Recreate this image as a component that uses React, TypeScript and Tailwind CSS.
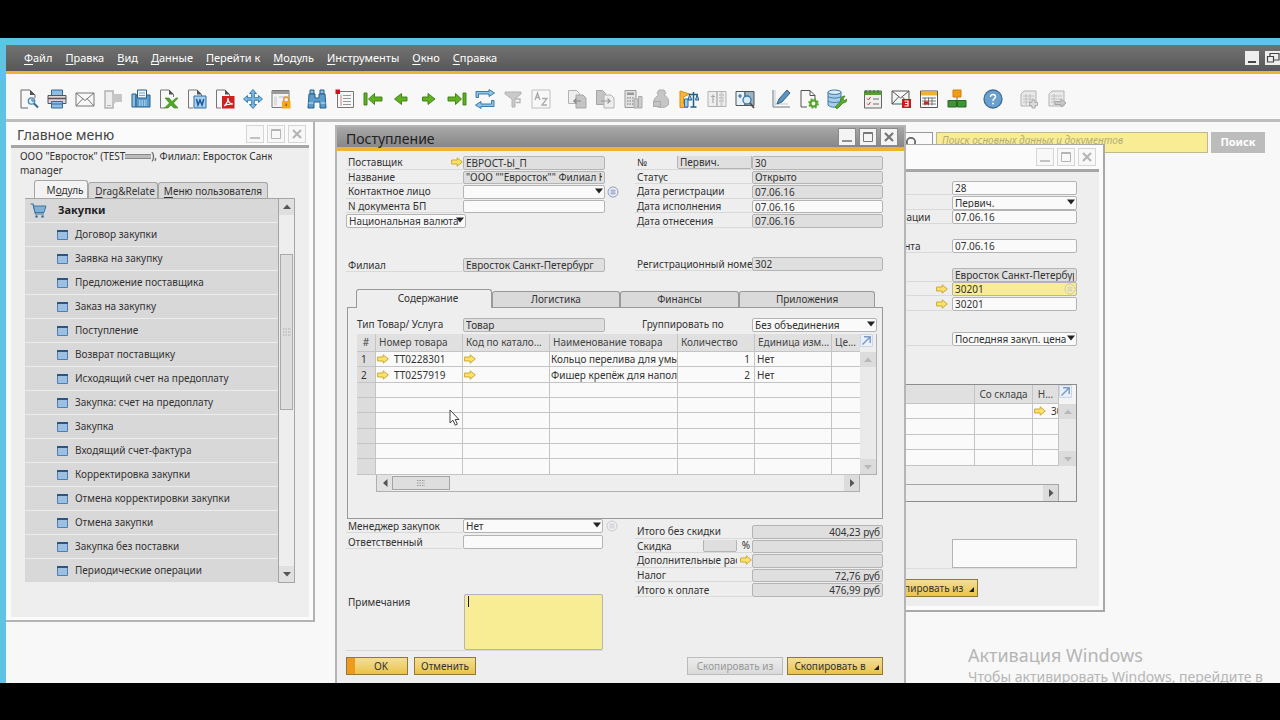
import React from "react";

const inputBase =
  "block h-full min-w-0 w-full rounded-[2px] border border-[#b4b4b4] px-[2px] py-0 text-[10px] leading-none text-[#333] outline-none";
const tones = {
  ro: "bg-[#dfdfdf]",
  rw: "bg-[#fafafa]",
  hot: "bg-[#f8ec94]",
};
type Tone = keyof typeof tones;

function Box({ id, value = "", tone = "ro", right = false, label }: { id: string; value?: string; tone?: Tone; right?: boolean; label?: string }) {
  return (
    <input
      id={id}
      aria-label={label}
      defaultValue={value}
      readOnly={tone === "ro"}
      className={`${inputBase} ${tones[tone]} ${right ? "text-right" : "text-left"}`}
    />
  );
}

function Pick({ id, value = "", label }: { id: string; value?: string; label?: string }) {
  return (
    <div className="relative h-full w-full">
      <select id={id} aria-label={label} className={`${inputBase} appearance-none bg-[#fafafa]`}>
        <option>{value}</option>
      </select>
      <svg className="pointer-events-none absolute right-[2px] top-[3px]" width="8" height="6" viewBox="0 0 8 6">
        <path d="M0 0.5h8L4 5.5z" fill="#222" />
      </svg>
    </div>
  );
}

function Arrow() {
  return (
    <svg className="shrink-0" width="12" height="10" viewBox="0 0 12 10">
      <path d="M0.6 3h5.6V0.8L11.3 5 6.2 9.2V7H0.6z" fill="#fbe36a" stroke="#c9a227" strokeWidth="0.9" />
    </svg>
  );
}

function ListMark({ dim = false }: { dim?: boolean }) {
  return (
    <svg className="shrink-0" width="12" height="12" viewBox="0 0 12 12" opacity={dim ? 0.4 : 1}>
      <circle cx="6" cy="6" r="5" fill="#eef0fa" stroke={dim ? "#999" : "#8f97bd"} />
      <path d="M3.5 4.2h5M3.5 6h5M3.5 7.8h5" stroke={dim ? "#888" : "#7078a8"} strokeWidth="0.8" />
    </svg>
  );
}

function Row({ id, label, children, mark }: { id: string; label: string; children: React.ReactNode; mark?: React.ReactNode }) {
  return (
    <div className="flex min-h-0 items-stretch pb-px">
      <div className="flex w-[117px] shrink-0 items-center justify-between overflow-hidden border-b border-[#d9d9d9] pl-[2px]">
        <label htmlFor={id} className="whitespace-nowrap leading-none">{label}</label>
        {mark}
      </div>
      <div className="min-w-0 flex-1">{children}</div>
    </div>
  );
}

function WinButtons({ dim = false }: { dim?: boolean }) {
  const c = dim ? "#b5b5b5" : "#777";
  const cls = dim
    ? "grid h-[18px] w-[18px] place-items-center border border-[#d6d6d6] bg-[#f8f8f8]"
    : "grid h-[18px] w-[18px] place-items-center border border-[#8a8a8a] bg-[#f4f4f4]";
  return (
    <div className="flex gap-[3px]">
      <button aria-label="Свернуть" className={cls}>
        <svg width="12" height="12" viewBox="0 0 12 12"><path d="M1 10h10" stroke={c} strokeWidth="1.6" /></svg>
      </button>
      <button aria-label="Развернуть" className={cls}>
        <svg width="12" height="12" viewBox="0 0 12 12"><path d="M1.5 1.5h9v9h-9zM1.5 2.5h9" fill="none" stroke={c} /></svg>
      </button>
      <button aria-label="Закрыть" className={cls}>
        <svg width="12" height="12" viewBox="0 0 12 12"><path d="M2 2l8 8M10 2l-8 8" stroke={c} strokeWidth="2.2" /></svg>
      </button>
    </div>
  );
}

function Tri({ dir, dim = false }: { dir: "up" | "down" | "left" | "right"; dim?: boolean }) {
  const d = { up: "M4 1.5L8 6H0z", down: "M0 2h8L4 6.5z", left: "M6.500 0v8L2 4z", right: "M2 0v8L6.500 4z" }[dir];
  return <svg width="8" height="8" viewBox="0 0 8 8"><path d={d} fill={dim ? "#b8b8b8" : "#555"} /></svg>;
}

const G = "#b3b3b3";
const B = "#2f6f9f";
const L = "#8fbce0";

const icons: { name: string; art: React.ReactNode }[][] = [
  [
    { name: "Предварительный просмотр", art: <><path d="M2 1h9l5 5v3M2 1v18h7" fill="none" stroke="#666" /><path d="M11 1v5h5z" fill="#555" /><circle cx="12.500" cy="12" r="3.200" fill="#dcecf7" stroke="#4c88b5" strokeWidth="1.300" /><path d="M12 11h2v2" fill="none" stroke={B} /><path d="M15 14.500l4 4" stroke={B} strokeWidth="2" /></> },
    { name: "Печать", art: <><path d="M4.500 1h11v6h-11z" fill={L} stroke={B} /><path d="M1 6.500h18v8H1z" fill="#d8d8d8" stroke="#555" /><path d="M1 9.500h18" stroke="#555" strokeWidth="1.500" /><path d="M4.500 12.500h11V19h-11z" fill={L} stroke={B} /><path d="M5 15h10" stroke={B} /></> },
    { name: "Почта", art: <path d="M1 4h18v13H1zM1 4l9 7.500L19 4M1 17l7-7.500M19 17l-7-7.500" fill="#f8f8f8" stroke="#777" /> },
    { name: "SMS", art: <><path d="M2 2h8v17H2z" fill="#eee" stroke={G} strokeWidth="1.500" /><path d="M9 5h10v8h-6l-3 3v-3H9z" fill="#c6c6c6" /><path d="M4 16.500h4" stroke={G} /></> },
    { name: "Факс", art: <><path d="M1 5h4v13H1z" fill={L} stroke="#235f8c" /><path d="M5 6h14v12H5z" fill="#5a9ccc" stroke="#235f8c" /><path d="M6.500 1h9v8h-9z" fill="#edf5fb" stroke="#235f8c" /><path d="M8 4h6M8 6.500h6" stroke="#7aa5c4" /><path d="M8 12h8M8 14h8M8 16h8" stroke="#e2f0fa" strokeDasharray="1.500 1" /></> },
    { name: "Excel", art: <><path d="M1.500 1v18H6M1.500 1H10l4.500 4.500V8" fill="none" stroke="#777" /><path d="M10 0.500v5h5z" fill="#555" /><path d="M6 9h4l3 3.500L17 9h2l-4.500 5L19 19h-4l-3-3-3 3H5.500l5-5z" fill="#52a628" stroke="#2f7d12" strokeWidth="0.600" /></> },
    { name: "Word", art: <><path d="M1.500 1v18H6M1.500 1H10l4.500 4.500V8" fill="none" stroke="#777" /><path d="M10 0.500v5h5z" fill="#555" /><path d="M7 7h12v12H7z" fill="#a9d0ee" stroke="#2a6ea8" /><path d="M9.500 10l1.500 6 2-5 2 5 1.800-6" fill="none" stroke="#1c5b98" strokeWidth="1.500" /></> },
    { name: "PDF", art: <><path d="M1.500 1v18H6M1.500 1H10l4.500 4.500V8" fill="none" stroke="#777" /><path d="M10 0.500v5h5z" fill="#555" /><path d="M7 7h12.500v12.500H7z" fill="#cf1f1f" /><path d="M9 17c3-2 4-5 4-8 0 4 2 6 5 6-3 0-6 0-9 2z" fill="none" stroke="#fff" strokeWidth="1.200" /></> },
    { name: "Запустить приложение", art: <path d="M10 0.500l3.500 4h-2.200v4.200h4.200V6.500l4 3.500-4 3.500v-2.200h-4.200v4.200h2.200l-3.500 4-3.500-4h2.200v-4.200H4.500v2.200L0.500 10l4-3.500v2.200h4.200V4.500H6.500z" fill="#7db9e2" stroke="#2c75a8" strokeWidth="0.900" /> },
    { name: "Блокировка экрана", art: <><path d="M1 1.500h17v17H1z" fill="#f4f4f4" stroke="#777" /><path d="M1 2h17v3H1z" fill="#999" /><path d="M3 7.500h3v9H3z" fill="#ddd" /><path d="M8 8h7" stroke="#bbb" /><path d="M11 12h8.500v7.500H11z" fill="#f3a81c" /><path d="M12.800 12v-1.500a2.400 2.400 0 014.800 0V12" fill="none" stroke="#e59a12" strokeWidth="1.500" /><path d="M15.200 14.500v2.500" stroke="#8a5a00" strokeWidth="1.300" /></> },
  ],
  [
    { name: "Найти", art: <><path d="M3 1h4v4H3zM13 1h4v4h-4z" fill={L} stroke="#235f8c" /><path d="M2 5h6v4h4V5h6l1 14h-6v-6H7v6H1z" fill="#5a9ccc" stroke="#235f8c" /><path d="M1.500 14h5M13.500 14h5" stroke="#cfe5f5" /></> },
    { name: "Добавить", art: <><path d="M2.500 2.500h16v16h-16z" fill="#f8f8f8" stroke="#777" /><path d="M6 6v11" stroke="#c88" /><path d="M8 6.500h8M8 9.500h8M8 12.500h8M8 15.500h8" stroke="#999" /><path d="M0.500 0.500H5V5H0.500z" fill="#cf1020" /></> },
    { name: "Первая запись", art: <path d="M1 4h3v12H1zM5.500 10l6-5.500V8H19v4h-7.500v3.500z" fill="#62b022" stroke="#35800f" strokeWidth="0.900" /> },
    { name: "Предыдущая запись", art: <path d="M3.500 10l7-5.500V8H16v4h-5.500v3.500z" fill="#62b022" stroke="#35800f" strokeWidth="0.900" /> },
    { name: "Следующая запись", art: <path d="M16 10L9 4.500V8H3.500v4H9v3.500z" fill="#62b022" stroke="#35800f" strokeWidth="0.900" /> },
    { name: "Последняя запись", art: <path d="M16 4h3v12h-3zM14.500 10l-6-5.500V8H1v4h7.500v3.500z" fill="#62b022" stroke="#35800f" strokeWidth="0.900" /> },
    { name: "Обновить", art: <path d="M1 8.500v-6h13V0.500L19.500 4 14 7.500V5H3.500v3.500zM19 11.500v6H6v2L0.500 16 6 12.500V15h10.500v-3.500z" fill="#8fc3e8" stroke="#2c6f9f" strokeWidth="0.900" /> },
    { name: "Фильтр", art: <><path d="M2 3h16v2l-6 5v8H9v-8L2 5z" fill="#c9c9c9" stroke={G} /><path d="M12 10h5v3.500h-4" fill="none" stroke={G} strokeWidth="1.300" /></> },
    { name: "Сортировка", art: <><path d="M1 1h18v18H1z" fill="#f8f8f8" stroke="#c0c0c0" /><path d="M4 11l2.500-7L9 11M5 8.500h3M11 9.500h5l-5 6.500h5" fill="none" stroke="#aaa" strokeWidth="1.300" /></> },
  ],
  [
    { name: "Базовый документ", art: <><path d="M1.500 1.500h8l3 3v10h-11z" fill="#eee" stroke={G} /><path d="M9 6h7l3 3v10H9z" fill="#c4c4c4" stroke="#a5a5a5" /><path d="M14 12H7l2.500-2.500M7 12l2.500 2.500" fill="none" stroke="#888" strokeWidth="1.200" /></> },
    { name: "Целевой документ", art: <><path d="M1.500 1.500h6l3 3v11h-9z" fill="#c4c4c4" stroke="#a5a5a5" /><path d="M9 6h7l3 3v10H9z" fill="#eee" stroke={G} /><path d="M6 12h9l-2.500-2.500M15 12l-2.500 2.500" fill="none" stroke="#999" strokeWidth="1.200" /></> },
    { name: "Валовая прибыль", art: <><path d="M2 1.500h11v17H2z" fill="#e4e4e4" stroke="#999" /><path d="M4 3.500h7v2.500H4z" fill="#999" /><path d="M4 9h7M4 12h7M4 15h7" stroke="#999" strokeWidth="1.500" strokeDasharray="1.500 1" /><path d="M11 10h4v9h-4zM15.500 7.500h3.500V19h-3.500z" fill="#ccc" stroke="#aaa" /></> },
    { name: "Средства платежа", art: <><path d="M8 1h5l2 3-2 2c4 2 5 5 4.500 9-1 4-10 5-14 1-2-5 1-8 4-10L6 4z" fill="#c6c6c6" stroke="#adadad" /><path d="M2 12h8v6H2z" fill="#aaa" /><path d="M3 14h6M3 16h6" stroke="#ddd" /></> },
    { name: "Калькуляция", art: <><path d="M1 2v16.500h8L4.500 15V8l6-3z" fill="#f6b73c" stroke="#d78d10" /><path d="M5.500 10h3.500v8H5.500z" fill="#9ccbed" stroke={B} /><path d="M14.500 3v15M11.500 18h6M10 5.500h9" stroke="#235f8c" strokeWidth="1.500" /><path d="M10.500 6L9 11h4zM18 6l-1.500 5H20z" fill="#9ccbed" stroke="#235f8c" /></> },
    { name: "Журнальная запись", art: <><path d="M1 2.500h9v15H1zM10 2.500h9v15h-9z" fill="#eee" stroke={G} /><path d="M4 7.500h4M6 5.500V14M12 6h5M12 9h5M12 12h5" stroke="#aaa" strokeWidth="1.200" /><path d="M13.500 3h2v14h-2z" fill="#ccc" /></> },
    { name: "Просмотр проводки", art: <><path d="M1 2.500h9v14H1z" fill="#e8f2fa" stroke="#555" /><path d="M10 2.500h9v14h-9z" fill="#9bb3c6" stroke="#555" /><path d="M3 7h4M5 5v4" stroke={B} strokeWidth="1.200" /><circle cx="12" cy="11" r="4" fill="#d7eaf7" stroke="#3a78a6" strokeWidth="1.300" /><path d="M15 14l4 5" stroke="#555" strokeWidth="2" /></> },
  ],
  [
    { name: "Формат печати", art: <><path d="M2 1v17h17" fill="none" stroke="#777" /><path d="M2 15h15M4 1v17" stroke="#bcd" /><path d="M6 15l2-5 8-9 3 3-8 9z" fill="#5d94bf" stroke="#2d5f88" /></> },
    { name: "Настройки формы", art: <><path d="M2 1.500h9l5 5v4M2 1.500V18h6" fill="none" stroke="#555" /><path d="M11 1.500v5h5" fill="none" stroke="#555" /><circle cx="14.500" cy="14.500" r="3" fill="none" stroke="#52a628" strokeWidth="2.200" /><circle cx="14.500" cy="14.500" r="4.500" fill="none" stroke="#52a628" strokeWidth="1.600" strokeDasharray="1.800 1.734" /></> },
    { name: "Менеджер запросов", art: <><path d="M1 3v13c2 3 11 3 13 0V3z" fill="#a8cde8" stroke="#3c79a8" /><ellipse cx="7.500" cy="3.200" rx="6.500" ry="2.200" fill="#dbecf8" stroke="#3c79a8" /><path d="M1 7.500c3 2 10 2 13 0M1 12c3 2 10 2 13 0" fill="none" stroke="#3c79a8" /><path d="M8 18l6-6c-1-3 1-5 4-5l-2 3 1.500 1.500L20 10c0 3-2 4-4 4l-6 6z" fill="#5aaa2c" stroke="#35800f" strokeWidth="0.700" /></> },
  ],
  [
    { name: "Задачи", art: <><path d="M1.500 2h17v17h-17z" fill="#f0f0f0" stroke="#666" /><path d="M1.500 2h17v4h-17z" fill="#5a9b3c" /><path d="M3 1v3M7 1v3M11 1v3M15 1v3" stroke="#3c6b22" /><path d="M4 9.500l1.500 1.500 2-3M4 14.500l1.500 1.500 2-3" fill="none" stroke="#d33" /><path d="M10 10h6M10 15h6" stroke="#999" strokeWidth="1.300" /></> },
    { name: "Оповещения", art: <><path d="M1 2h17v13H1zM1 2l8.500 7L18 2M1 15l6.500-7M18 15l-6.500-7" fill="#f4f4f4" stroke="#555" /><path d="M11 10h9v9h-9z" fill="#c91818" /><path d="M13.500 12h3.500v5h-3.500M14 14.500h3" fill="none" stroke="#fff" strokeWidth="1.200" /></> },
    { name: "Календарь", art: <><path d="M1.500 2h17v16.500h-17z" fill="#fff" stroke="#555" /><path d="M2 2.500h16V6.500H2z" fill="#f3b12c" /><path d="M3 9h14M3 12h14M3 15h14M6 8.500v8M9.500 8.500v8M13 8.500v8" stroke="#666" strokeWidth="0.900" /><path d="M5 12.500h5v3H5z" fill="#c22" /></> },
    { name: "Организация", art: <><path d="M6 1h8v7H6z" fill="#f39c12" stroke="#d07f08" /><path d="M10 8v3M5 11.500h10" stroke="#777" /><path d="M1 11.500h8.500V18H1zM10.500 11.500H19V18h-8.500z" fill="#3f9436" stroke="#256b1e" /></> },
  ],
  [{ name: "Справка", art: <><circle cx="10" cy="10" r="9" fill="#6a9fce" stroke="#3d6b94" strokeWidth="1.300" /><path d="M7.500 8c0-3.500 5.200-3.300 5 0-.2 1.800-2.500 1.700-2.500 4" fill="none" stroke="#fff" strokeWidth="1.500" /><circle cx="10" cy="14.500" r="1" fill="#fff" /></> }],
  [
    { name: "Новая активность", art: <><path d="M2 5l3-3h12v15H2z" fill="#e9e9e9" stroke={G} /><path d="M4 7h11M4 10h11M4 13h8M7 5v11M11 5v9" stroke="#c0c0c0" /><path d="M13 11h3v2.500h2.500v3H16V19h-3v-2.500h-2.500v-3H13z" fill="#ddd" stroke="#aaa" /></> },
    { name: "Экспорт", art: <><path d="M2 5l3-3h12v15H2z" fill="#e9e9e9" stroke={G} /><path d="M4 7h11M4 10h11M4 13h5M7 5v11" stroke="#c0c0c0" /><path d="M8 12.500h6V10l5 4-5 4v-2.500H8z" fill="#c8c8c8" stroke="#a5a5a5" /></> },
  ],
];

const menus = ["Файл", "Правка", "Вид", "Данные", "Перейти к", "Модуль", "Инструменты", "Окно", "Справка"];

const modules = [
  "Договор закупки", "Заявка на закупку", "Предложение поставщика", "Заказ на закупку", "Поступление",
  "Возврат поставщику", "Исходящий счет на предоплату", "Закупка: счет на предоплату", "Закупка",
  "Входящий счет-фактура", "Корректировка закупки", "Отмена корректировки закупки", "Отмена закупки",
  "Закупка без поставки", "Периодические операции",
];

function Hot({ text }: { text: string }) {
  return <><span className="underline underline-offset-2">{text[0]}</span>{text.slice(1)}</>;
}

function MainMenu() {
  const tab = "rounded-t-[3px] border border-b-0 border-[#a5a5a5] text-[10px] leading-none whitespace-nowrap";
  return (
    <section className="absolute left-0 top-0 w-[309px] border-b-2 border-r-2 border-[#b3b3b3] bg-[#fbfbfb] pb-[3px] pl-[5px] pr-[4px]">
      <header className="flex h-[26px] items-center justify-between border-b-[3px] border-[#a6a6a6] pl-[6px] pr-[3px]">
        <h2 className="pt-[3px] text-[14px] leading-none text-[#444]">Главное меню</h2>
        <WinButtons dim />
      </header>
      <div className="bg-[#eee] px-[9px] pb-[34px] pt-[1px]">
        <p className="flex h-[14px] w-[252px] items-center overflow-hidden whitespace-nowrap">
          ООО "Евросток" (TEST
          <span className="inline-block h-[5px] w-[26px] shrink-0 border-y border-[#888] bg-[#bbb]" />
          ), Филиал: Евросток Санкт
        </p>
        <p className="h-[14px] leading-[14px]">manager</p>
        <div className="mt-[3px] flex items-end pl-[14px]">
          <button className={`${tab} h-[18px] w-[54px] bg-[#f3f3f3] pl-[8px]`}>М<span className="underline">о</span>дуль</button>
          <button className={`${tab} h-[16px] w-[70px] bg-[#d9d9d9] pl-[4px]`}><Hot text="Drag&Relate" /></button>
          <button className={`${tab} h-[16px] w-[110px] bg-[#d9d9d9]`}><Hot text="Меню пользователя" /></button>
        </div>
        <div className="mx-[5px] flex border-t border-[#a5a5a5]">
          <ul className="flex-1 bg-[#d8d8d8]">
            <li className="flex h-6 items-center gap-[11px] border-b border-[#ececec] pl-[5px] text-[11px] font-bold text-[#222]">
              <svg width="17" height="16" viewBox="0 0 17 16">
                <path d="M0.500 1H3l2.500 10h8.500" fill="none" stroke="#3f6f96" strokeWidth="1.200" />
                <path d="M3.500 3H16l-2 6.500H5z" fill="#7fb0d8" stroke="#3a74a3" />
                <circle cx="6.500" cy="13.500" r="1.300" fill="#3f6f96" /><circle cx="12.500" cy="13.500" r="1.300" fill="#3f6f96" />
              </svg>
              <span>Закупки</span>
            </li>
            {modules.map((m) => (
              <li key={m} className="h-6 border-b border-[#ececec]">
                <a href="#" className="flex h-full items-center gap-[7px] pl-[32px] text-[10px] text-[#333]">
                  <svg width="11" height="10" viewBox="0 0 11 10"><path d="M0.500 0.500h10v9h-10z" fill="#9dc0e2" stroke="#4f7fae" /><path d="M0 1h11" stroke="#2b5580" strokeWidth="2" /></svg>
                  {m}
                </a>
              </li>
            ))}
          </ul>
          <div className="flex w-[17px] flex-col items-center border-x border-b border-[#a5a5a5] bg-[#eee]">
            <button aria-label="Вверх" className="grid h-4 w-full place-items-center bg-[#e0e0e0]"><Tri dir="up" /></button>
            <div className="mt-[39px] grid h-[156px] w-[13px] place-items-center border border-[#aaa] bg-[#dedede]">
              <svg width="8" height="8" viewBox="0 0 8 8"><path d="M0 1h8M0 4h8M0 7h8" stroke="#aaa" strokeDasharray="1.500 1" /></svg>
            </div>
            <button aria-label="Вниз" className="mt-auto grid h-4 w-full place-items-center bg-[#e0e0e0]"><Tri dir="down" /></button>
          </div>
        </div>
      </div>
    </section>
  );
}

function Expand() {
  return (
    <svg width="13" height="13" viewBox="0 0 13 13">
      <path d="M0.500 0.500h12v12H0.500z" fill="#eaf0f9" stroke="#ccd6e6" />
      <path d="M2.500 10.500l7-7M4 2.800h6.200V9" fill="none" stroke="#7d9cc9" strokeWidth="1.500" />
    </svg>
  );
}

const gold = "border border-[#8d7a3a] bg-linear-to-b from-[#f3de96] to-[#eac443] text-[10px] leading-none text-[#333] whitespace-nowrap";

function Corner() {
  return <svg className="absolute bottom-[4px] right-[3px]" width="5" height="5" viewBox="0 0 5 5"><path d="M5 0v5H0z" fill="#222" /></svg>;
}

function OrderWindow() {
  const label = "flex w-[114px] items-center justify-between overflow-hidden whitespace-nowrap border-b border-[#d9d9d9] pl-[5px] pr-[4px] leading-none";
  const row = "flex h-[14px] justify-end";
  const cell = "overflow-hidden border-b border-r border-[#c4c4c4] p-0";
  return (
    <section className="absolute left-[694px] top-[22px] w-[405px] border-b-2 border-r-2 border-t border-[#a9a9a9] bg-[#fbfbfb] pb-[4px] pr-[4px]">
      <header className="flex h-[27px] items-center justify-end border-b-[3px] border-[#a6a6a6] pr-[3px]"><WinButtons dim /></header>
      <div className="bg-[#eee] pb-[9px] pr-[22px] pt-[9px]">
        <div className={row}><label htmlFor="o-num" className={label}>№</label><div className="w-[125px]"><Box id="o-num" value="28" tone="rw" /></div></div>
        <div className={`${row} mt-px`}><label htmlFor="o-ser" className={label}>Серия</label><div className="w-[125px]"><Pick id="o-ser" value="Первич." /></div></div>
        <div className={row}><label htmlFor="o-reg" className={label}>Дата регистрации</label><div className="w-[125px]"><Box id="o-reg" value="07.06.16" tone="rw" /></div></div>
        <div className={`${row} mt-[15px]`}><label htmlFor="o-doc" className={label}>Дата документа</label><div className="w-[125px]"><Box id="o-doc" value="07.06.16" tone="rw" /></div></div>
        <div className={`${row} mt-[15px]`}><label htmlFor="o-br" className={label}>Филиал</label><div className="w-[125px]"><Box id="o-br" value="Евросток Санкт-Петербург" /></div></div>
        <div className={row}>
          <div className={label}><label htmlFor="o-from">Со склада</label><Arrow /></div>
          <div className="relative w-[125px]"><Box id="o-from" value="30201" tone="hot" /><span className="absolute right-px top-px"><ListMark dim /></span></div>
        </div>
        <div className={`${row} mt-px`}>
          <div className={label}><label htmlFor="o-to">На склад</label><Arrow /></div>
          <div className="w-[125px]"><Box id="o-to" value="30201" tone="rw" /></div>
        </div>
        <div className={`${row} mt-[21px]`}><label htmlFor="o-pr" className={label}>Прайс-лист</label><div className="w-[125px]"><Pick id="o-pr" value="Последняя закуп. цена" /></div></div>
        <div className="mt-[38px] border-b border-r border-t border-[#8c8c8c]">
          <div className="flex">
            <table className="w-full min-w-0 table-fixed border-separate border-spacing-0 bg-[#fafafa]">
              <thead>
                <tr className="h-[19px] bg-[#e0e0e0] text-[#444]">
                  <th className={cell} />
                  <th className={`${cell} w-[58px] font-normal`}>Со склада</th>
                  <th className={`${cell} w-[26px] font-normal`}>Н...</th>
                </tr>
              </thead>
              <tbody>
                {[0, 1, 2, 3].map((i) => (
                  <tr key={i} className={i % 2 ? "h-4" : "h-[15px]"}>
                    <td className={cell} /><td className={cell} />
                    <td className={cell}>{i === 0 && <div className="flex h-[13px] items-center gap-[5px] pl-px leading-none"><Arrow />30201</div>}</td>
                  </tr>
                ))}
              </tbody>
            </table>
            <div className="flex w-[17px] shrink-0 flex-col items-center bg-[#e9e9e9]">
              <div className="h-[19px] w-full bg-[#f4f4f4]"><Expand /></div>
              <button aria-label="Вверх" className="grid h-[15px] w-full place-items-center bg-[#dcdcdc]"><Tri dir="up" dim /></button>
              <button aria-label="Вниз" className="mt-auto grid h-[15px] w-full place-items-center bg-[#dcdcdc]"><Tri dir="down" dim /></button>
            </div>
          </div>
          <div className="mr-[17px] mt-[18px] flex h-[17px] justify-end border-r border-t border-[#a5a5a5]">
            <button aria-label="Вправо" className="grid w-[15px] place-items-center bg-[#dcdcdc]"><Tri dir="right" /></button>
          </div>
        </div>
        <div className="mt-[37px] flex justify-end border-b border-[#ddd]">
          <textarea aria-label="Примечания к заказу" className="block h-[29px] w-[125px] resize-none border border-[#b4b4b4] bg-[#fafafa]" />
        </div>
        <div className="mt-[10px] flex justify-end pr-[99px]">
          <button className={`${gold} relative h-[18px] w-[96px] pr-[10px]`}>Скопировать из<Corner /></button>
        </div>
      </div>
    </section>
  );
}

const columns = [
  { t: "#", w: "w-[19px]" }, { t: "Номер товара", w: "w-[87px]" }, { t: "Код по катало...", w: "w-[87px]" },
  { t: "Наименование товара", w: "w-[128px]" }, { t: "Количество", w: "w-[77px]" },
  { t: "Единица изм...", w: "w-[77px]" }, { t: "Це...", w: "w-[29px]" },
];
const goods = [
  { code: "TT0228301", name: "Кольцо перелива для умывальника", qty: 1, unit: "Нет" },
  { code: "TT0257919", name: "Фишер крепёж для напольных", qty: 2, unit: "Нет" },
];

function GoodsTable() {
  const cell = "overflow-hidden whitespace-nowrap border-b border-r border-[#c4c4c4] p-0";
  return (
    <div className="flex items-start">
      <div className="min-w-0 flex-1">
        <table className="w-full table-fixed border-separate border-spacing-0 bg-[#fafafa]">
          <thead>
            <tr className="h-[18px] bg-[#e0e0e0] text-[#444]">
              {columns.map((c, i) => (
                <th key={c.t} className={`${cell} ${c.w} ${i === 0 ? "text-center" : "pl-[3px] text-left"} pb-[2px] font-normal leading-none`}>{c.t}</th>
              ))}
            </tr>
          </thead>
          <tbody className="leading-none">
            {[0, 1, 2, 3, 4, 5, 6, 7].map((i) => {
              const g = goods[i];
              return (
                <tr key={i} className={i % 3 === 1 ? "h-4" : "h-[15px]"}>
                  <td className={`${cell} bg-[#dcdcdc] pl-[4px]`}>{g && i + 1}</td>
                  <td className={cell}>{g && <div className="flex items-center gap-[5px] pl-px"><Arrow />{g.code}</div>}</td>
                  <td className={cell}>{g && <div className="pl-px"><Arrow /></div>}</td>
                  <td className={`${cell} pl-px`}>{g?.name}</td>
                  <td className={`${cell} pr-[4px] text-right`}>{g?.qty}</td>
                  <td className={`${cell} pl-[2px]`}>{g?.unit}</td>
                  <td className={cell} />
                </tr>
              );
            })}
          </tbody>
        </table>
        <div className="ml-[19px] flex h-[17px] items-stretch border-b border-x border-[#b0b0b0]">
          <button aria-label="Влево" className="grid w-[15px] place-items-center bg-[#e2e2e2]"><Tri dir="left" /></button>
          <div className="my-px grid w-[58px] place-items-center border border-[#a5a5a5] bg-[#dedede]">
            <svg width="8" height="6" viewBox="0 0 8 6"><path d="M0 0.500h8M0 3h8M0 5.500h8" stroke="#999" strokeDasharray="1.500 1" /></svg>
          </div>
          <button aria-label="Вправо" className="ml-auto grid w-[15px] place-items-center bg-[#dcdcdc]"><Tri dir="right" /></button>
        </div>
      </div>
      <div className="flex h-[141px] w-[17px] flex-col items-center border-b border-r border-[#b0b0b0] bg-[#eaeaea]">
        <div className="h-[18px] w-full bg-[#eee]"><Expand /></div>
        <button aria-label="Вверх" className="grid h-[15px] w-full place-items-center bg-[#dcdcdc]"><Tri dir="up" dim /></button>
        <button aria-label="Вниз" className="mt-auto grid h-[15px] w-full place-items-center bg-[#dcdcdc]"><Tri dir="down" dim /></button>
      </div>
    </div>
  );
}

function ReceiptWindow() {
  const tab = "min-w-0 rounded-t-[3px] border border-b-0 border-[#999] px-0 pb-[2px] text-[10px] leading-none";
  return (
    <section className="absolute left-[329px] top-[3px] w-[571px] border-2 border-[#b5b5b5] bg-[#eee] pb-[20px]">
      <header className="flex h-[24px] items-center justify-between border-b-4 border-[#eab52f] bg-linear-to-b from-[#a8a8a8] to-[#878787] pl-[9px] pr-[6px]">
        <h2 className="pt-[3px] text-[14px] leading-none text-[#222]">Поступление</h2>
        <WinButtons />
      </header>
      <div className="pl-[9px] pr-[21px] pt-[5px]">
        <div className="flex items-start justify-between">
          <div className="relative w-[259px]">
            <div className="grid h-[73px] grid-rows-5">
              <Row id="vendor" label="Поставщик" mark={<Arrow />}><Box id="vendor" value="ЕВРОСТ-Ы_П" /></Row>
              <Row id="vname" label="Название"><Box id="vname" value={'"ООО ""Евросток"" Филиал Куйбышев'} /></Row>
              <Row id="contact" label="Контактное лицо"><Pick id="contact" /></Row>
              <Row id="bpdoc" label="N документа БП"><Box id="bpdoc" tone="rw" /></Row>
              <div className="w-[120px] pb-px"><Pick id="cur" value="Национальная валюта" label="Валюта" /></div>
            </div>
            <span className="absolute left-[261px] top-[30px]"><ListMark /></span>
            <div className="mt-[29px] grid h-[15px]"><Row id="branch" label="Филиал"><Box id="branch" value="Евросток Санкт-Петербург" /></Row></div>
          </div>
          <div className="w-[248px]">
            <div className="grid h-[73px] grid-rows-5">
              <Row id="num" label="№" mark={<div className="h-[14px] w-[75px] shrink-0"><Box id="series" value="Первич." label="Серия" /></div>}><Box id="num" value="30" /></Row>
              <Row id="status" label="Статус"><Box id="status" value="Открыто" /></Row>
              <Row id="dreg" label="Дата регистрации"><Box id="dreg" value="07.06.16" /></Row>
              <Row id="dexec" label="Дата исполнения"><Box id="dexec" value="07.06.16" tone="rw" /></Row>
              <Row id="dpost" label="Дата отнесения"><Box id="dpost" value="07.06.16" /></Row>
            </div>
            <div className="mt-[28px] grid h-[15px]"><Row id="regno" label="Регистрационный номер"><Box id="regno" value="302" /></Row></div>
          </div>
        </div>

        <div className="mt-[15px] flex h-[19px] items-end pl-[10px] pr-[8px]">
          <button className={`${tab} relative z-10 -mb-px h-[19px] flex-[136] bg-[#eee]`}><span className="pl-[8px]">Содержание</span></button>
          <button className={`${tab} h-[16px] flex-[128] bg-[#dadada]`}>Логистика</button>
          <button className={`${tab} h-[16px] flex-[119] bg-[#dadada]`}>Финансы</button>
          <button className={`${tab} h-[16px] flex-[136] bg-[#dadada]`}>Приложения</button>
        </div>
        <div className="ml-px border border-[#999] pb-[26px] pl-[9px] pr-[5px] pt-[10px]">
          <div className="flex h-[14px] items-stretch">
            <label htmlFor="kind" className="w-[106px] leading-[13px]">Тип Товар/ Услуга</label>
            <div className="w-[142px]"><Box id="kind" value="Товар" /></div>
            <label htmlFor="grp" className="ml-auto w-[110px] leading-[13px]">Группировать по</label>
            <div className="w-[125px]"><Pick id="grp" value="Без объединения" /></div>
          </div>
          <div className="mt-[2px]"><GoodsTable /></div>
        </div>

        <div className="flex items-start justify-between">
          <div className="relative w-[257px]">
            <div className="grid h-[15px]"><Row id="mgr" label="Менеджер закупок"><Pick id="mgr" value="Нет" /></Row></div>
            <span className="absolute left-[260px] top-px"><ListMark dim /></span>
            <div className="mt-px grid h-[15px]"><Row id="resp" label="Ответственный"><Box id="resp" tone="rw" /></Row></div>
            <div className="relative mt-[44px] flex items-start border-b border-[#d9d9d9]">
              <label htmlFor="notes" className="w-[118px] pl-[2px] pt-px">Примечания</label>
              <textarea id="notes" className="block h-[56px] min-w-0 flex-1 resize-none rounded-[2px] border border-[#b4b4b4] bg-[#f8ec94]" />
              <span className="absolute left-[122px] top-[2px] h-[11px] w-px bg-[#222]" />
            </div>
          </div>
          <div className="mt-[6px] grid h-[73px] w-[248px] grid-rows-5">
            <Row id="sub" label="Итого без скидки"><Box id="sub" value="404,23 руб" right /></Row>
            <Row id="disc" label="Скидка" mark={<div className="flex shrink-0 items-center gap-[5px] pr-[2px]"><div className="h-[13px] w-[34px]"><Box id="pct" label="Процент скидки" /></div>%</div>}><Box id="disc" /></Row>
            <div className="flex min-h-0 items-stretch pb-px">
              <div className="flex w-[117px] shrink-0 items-center justify-between overflow-hidden border-b border-[#d9d9d9] pl-[2px]">
                <label htmlFor="extra" className="w-[100px] overflow-hidden whitespace-nowrap">Дополнительные расходы</label>
                <Arrow />
              </div>
              <Box id="extra" />
            </div>
            <Row id="tax" label="Налог"><Box id="tax" value="72,76 руб" right /></Row>
            <Row id="total" label="Итого к оплате"><Box id="total" value="476,99 руб" right /></Row>
          </div>
        </div>

        <div className="mt-[6px] flex gap-[6px]">
          <button className={`${gold} flex h-[18px] w-[62px] items-stretch`}><span className="w-[8px] bg-[#ee9a1c]" /><span className="flex-1 self-center">OK</span></button>
          <button className={`${gold} h-[18px] w-[62px]`}>Отменить</button>
          <button disabled className="ml-auto h-[18px] w-[96px] border border-[#bbb] bg-linear-to-b from-[#ececec] to-[#dadada] text-[10px] leading-none text-[#999]">Скопировать из</button>
          <button className={`${gold} relative -ml-[2px] h-[18px] w-[96px] pr-[10px]`}>Скопировать в<Corner /></button>
        </div>
      </div>
    </section>
  );
}

export default function App() {
  return (
    <div className="flex h-screen flex-col overflow-hidden bg-black pb-[37px] pt-[38px] font-['Noto_Sans','Liberation_Sans',sans-serif] text-[10px] text-[#333]">
      <div className="flex min-h-0 flex-1 flex-col border-l-[6px] border-t-[7px] border-[#5fc4e4] bg-[#f8f8f8]">
        <nav className="flex h-[29px] shrink-0 items-center justify-between border-b-[3px] border-[#eab52f] bg-linear-to-b from-[#727272] to-[#585858] pl-[18px] text-[11px] text-white">
          <ul className="flex gap-[13px]">
            {menus.map((m) => <li key={m}><a href="#" className="block leading-4"><Hot text={m} /></a></li>)}
          </ul>
          <div className="flex gap-[6px] overflow-hidden">
            <button aria-label="Свернуть окно" className="h-[14px] w-[14px] bg-[#eee]"><svg width="14" height="14" viewBox="0 0 14 14"><path d="M3 11h8" stroke="#333" strokeWidth="1.800" /></svg></button>
            <button aria-label="Восстановить окно" className="h-[14px] w-[15px] bg-[#eee]"><svg width="15" height="14" viewBox="0 0 15 14"><path d="M5 5V2.500h9V9H9M2.500 5.500h6v5.500h-6z" fill="none" stroke="#444" strokeWidth="1.200" /></svg></button>
          </div>
        </nav>
        <div className="flex h-[48px] shrink-0 items-center gap-2 border-b-[3px] border-[#bdbdbd] pl-[9px] pt-[4px]">
          {icons.map((g, i) => (
            <div key={i} className="flex">
              {g.map((ic) => (
                <button key={ic.name} aria-label={ic.name} className="grid w-7 place-items-center">
                  <svg width="20" height="20" viewBox="0 0 20 20">{ic.art}</svg>
                </button>
              ))}
            </div>
          ))}
        </div>
        <main className="relative min-h-0 flex-1 overflow-hidden">
          <form className="ml-auto mr-[15px] mt-[10px] flex h-[21px] w-[366px] items-stretch gap-[3px]">
            <button type="button" aria-label="Область поиска" className="w-[34px] border border-[#999] bg-[#fafafa] pl-[5px]">
              <svg width="14" height="14" viewBox="0 0 14 14"><circle cx="6" cy="6" r="4.200" fill="none" stroke="#666" strokeWidth="1.800" /><path d="M9 9l3 4" stroke="#666" strokeWidth="1.800" /></svg>
            </button>
            <input aria-label="Поиск" placeholder="Поиск основных данных и документов" className="min-w-0 flex-1 border border-[#bdb98c] bg-[#f8ec94] px-[5px] pb-[6px] text-[10px] italic leading-none placeholder:text-[#b3ac78]" />
            <button type="button" className="w-[54px] bg-[#bcbcbc] text-[11px] font-bold text-white">Поиск</button>
          </form>
          <aside className="absolute bottom-0 left-[962px] h-[41px] overflow-hidden whitespace-nowrap text-[#b5b5b5]">
            <p className="text-[18px] leading-[26px]">Активация Windows</p>
            <p className="text-[14px] leading-[18px]">Чтобы активировать Windows, перейдите в</p>
          </aside>
          <MainMenu />
          <OrderWindow />
          <ReceiptWindow />
          <svg className="absolute left-[443px] top-[287px]" width="12" height="18" viewBox="0 0 12 18">
            <path d="M1 1v13l3-2.800 2.200 5 2.200-1-2.200-4.700H10z" fill="#fff" stroke="#444" />
          </svg>
        </main>
      </div>
    </div>
  );
}
